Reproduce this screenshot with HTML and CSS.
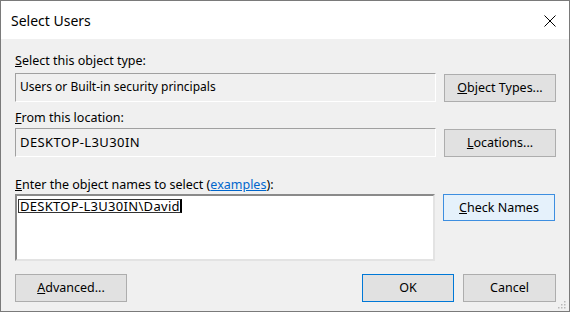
FILE: index.html
```html
<!DOCTYPE html>
<html>
<head>
<meta charset="utf-8">
<link rel="stylesheet" href="styles.css">
</head>
<body>
<div class="window">
  <div class="titlebar">
    <span class="title">Select Users</span>
    <svg class="close" width="12" height="12" viewBox="0 0 12 12"><path d="M0.5 0.5 L11.5 11.5 M11.5 0.5 L0.5 11.5" stroke="#000" stroke-width="1"/></svg>
  </div>
  <div class="content">
    <div class="label l1"><u>S</u>elect this object type:</div>
    <div class="row r1">
      <div class="static">Users or Built-in security principals</div>
      <button class="btn side"><u>O</u>bject Types...</button>
    </div>
    <div class="label l2"><u>F</u>rom this location:</div>
    <div class="row r2">
      <div class="static caps">DESKTOP-L3U30IN</div>
      <button class="btn side"><u>L</u>ocations...</button>
    </div>
    <div class="label l3"><u>E</u>nter the object names to select (<span class="link">examples</span>):</div>
    <div class="row r3">
      <div class="edit"><span class="name">DESKTOP-L3U30IN\David</span></div>
      <button class="btn side hover"><u>C</u>heck Names</button>
    </div>
    <div class="bottom">
      <button class="btn adv"><u>A</u>dvanced...</button>
      <div class="spacer"></div>
      <button class="btn ok">OK</button>
      <button class="btn cancel">Cancel</button>
    </div>
    <svg class="grip" width="8" height="8" viewBox="0 0 8 8">
      <rect x="6" y="0" width="1.5" height="1.5" fill="#b8b8b8"/>
      <rect x="3" y="3" width="1.5" height="1.5" fill="#b8b8b8"/>
      <rect x="6" y="3" width="1.5" height="1.5" fill="#b8b8b8"/>
      <rect x="0" y="6" width="1.5" height="1.5" fill="#b8b8b8"/>
      <rect x="3" y="6" width="1.5" height="1.5" fill="#b8b8b8"/>
      <rect x="6" y="6" width="1.5" height="1.5" fill="#b8b8b8"/>
    </svg>
  </div>
</div>
</body>
</html>
```
FILE: styles.css
```css
* { box-sizing: border-box; }
html, body { margin: 0; padding: 0; background: #ffffff; }
body {
  font-family: "Noto Sans", "Open Sans", sans-serif;
  font-size: 12.5px;
  color: #000;
}
.window {
  width: 570px;
  height: 312px;
  border: 1px solid #7a7a7a;
  background: #f0f0f0;
  display: flex;
  flex-direction: column;
}
.titlebar {
  height: 38px;
  background: #ffffff;
  display: flex;
  align-items: center;
  padding: 0 13px 0 10px;
}
.title {
  font-size: 14px;
  flex: 1;
  margin-top: 0;
}
.close { display: block; margin-top: 1px; }
.content {
  position: relative;
  flex: 1;
  padding: 14px 13px 0 14px;
  display: flex;
  flex-direction: column;
}
.label {
  line-height: 16px;
  height: 16px;
}
.l1 { margin-bottom: 4px; }
.l2 { margin-top: 8px; margin-bottom: 2px; }
.l3 { margin-top: 20px; margin-bottom: 1px; }
.row {
  display: flex;
  gap: 8px;
  align-items: flex-start;
}
.static {
  width: 421px;
  height: 29px;
  border: 1px solid;
  border-color: #a0a0a0 #ffffff #ffffff #a0a0a0;
  background: #f0f0f0;
  padding: 0 0 0 4px;
  line-height: 26px;
  font-size: 12px;
}
.caps { font-size: 13px; letter-spacing: 0.4px; }
.btn {
  font-family: inherit;
  font-size: 12.5px;
  color: #000;
  background: #e1e1e1;
  border: 1px solid #adadad;
  padding: 0;
  margin: 0;
  height: 28px;
  line-height: 26px;
  text-align: center;
}
.side { width: 112px; margin-top: 1px; }
.r3 .side { margin-top: 0; height: 27px; }
.hover { background: #e5f1fb; border-color: #3d8ee0; }
.edit {
  width: 420px;
  height: 67px;
  background: #ffffff;
  border-style: solid;
  border-width: 2px;
  border-color: #8a8a8a #e3e3e3 #e3e3e3 #8a8a8a;
  padding: 3px 0 0 1px;
  line-height: 15px;
}
.name {
  display: inline-block;
  border: 1px solid #333;
  border-right: 2px solid #000;
  padding: 0 0 0 1px;
  line-height: 12px;
  font-size: 13px;
  letter-spacing: 0.3px;
}
.link { color: #0066cc; text-decoration: underline; }
.bottom {
  display: flex;
  gap: 9px;
  margin-top: 13px;
}
.bottom .btn { height: 28px; }
.spacer { flex: 1; }
.adv { width: 112px; }
.ok { width: 92px; border-color: #0078d7; }
.cancel { width: 93px; }
.grip {
  position: absolute;
  right: 3px;
  bottom: 2px;
}
```
